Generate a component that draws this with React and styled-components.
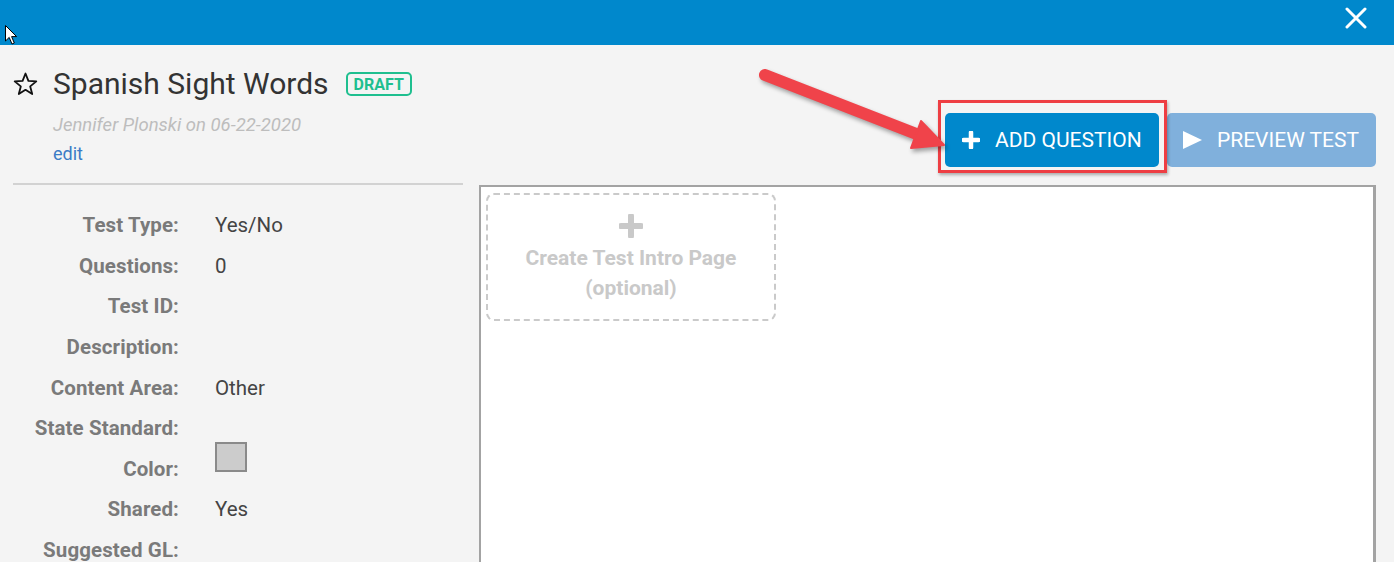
import React from 'react'
import styled, { createGlobalStyle } from 'styled-components'

const GlobalStyle = createGlobalStyle`
  html, body {
    margin: 0;
    padding: 0;
    background: #f4f4f4;
    font-family: Roboto, "Liberation Sans", Arial, sans-serif;
    overflow: hidden;
  }
`

const Page = styled.div`
  position: relative;
  width: 1394px;
  height: 562px;
  overflow: hidden;
  background: #f4f4f4;
`

const TopBar = styled.div`
  height: 45px;
  background: #0088cc;
  display: flex;
  justify-content: flex-end;
  align-items: center;
  padding-right: 26px;
`

const CloseButton = styled.button`
  width: 24px;
  height: 24px;
  padding: 0;
  border: 0;
  background: transparent;
  display: flex;
  align-items: center;
  justify-content: center;
  margin-top: -9px;
`

const Cursor = styled.svg`
  position: absolute;
  left: 5px;
  top: 25px;
`

const Main = styled.div`
  display: grid;
  grid-template-columns: 450px 1fr;
  column-gap: 16px;
  padding: 0 18px 0 13px;
`

const LeftColumn = styled.div`
  display: flex;
  flex-direction: column;
`

const Header = styled.div`
  height: 140px;
  box-sizing: border-box;
  padding-top: 22px;
  border-bottom: 2px solid #d2d2d2;
`

const TitleRow = styled.div`
  display: flex;
  align-items: center;
  height: 34px;
`

const StarIcon = styled.svg`
  flex: none;
  margin-right: 15px;
`

const Title = styled.h1`
  margin: 0;
  font-size: 30px;
  line-height: 34px;
  font-weight: 400;
  color: #333;
`

const Badge = styled.span`
  margin-left: 17px;
  height: 24px;
  box-sizing: border-box;
  padding: 0 6px;
  display: inline-flex;
  align-items: center;
  border: 2px solid #1fbf8f;
  border-radius: 5px;
  color: #1fbf8f;
  font-size: 16px;
  font-weight: 700;
`

const Author = styled.div`
  margin: 11px 0 0 40px;
  font-size: 18.5px;
  line-height: 26px;
  font-style: italic;
  color: #bdbdbd;
`

const EditLink = styled.a`
  display: block;
  margin: 3px 0 0 40px;
  font-size: 18px;
  line-height: 26px;
  color: #3b7cc6;
  text-decoration: none;
`

const Details = styled.dl`
  margin: 0;
  padding-top: 20px;
  display: grid;
  grid-template-columns: 166px 1fr;
  grid-auto-rows: 40.6px;
  column-gap: 36px;
  align-items: center;
`

const Label = styled.dt`
  margin: 0;
  text-align: right;
  font-size: 20.5px;
  font-weight: 700;
  letter-spacing: 0.1px;
  color: #7a7a7a;
`

const Value = styled.dd`
  margin: 0;
  font-size: 20.5px;
  color: #444;
`

const Swatch = styled.div`
  width: 32px;
  height: 30px;
  box-sizing: border-box;
  margin-top: -24px;
  background: ${p => p.color};
  border: 2px solid #8a8a8a;
`

const RightColumn = styled.div`
  display: flex;
  flex-direction: column;
  position: relative;
`

const Toolbar = styled.div`
  height: 140px;
  box-sizing: border-box;
  display: flex;
  justify-content: flex-end;
  align-items: flex-end;
  gap: 8px;
  padding-bottom: 18px;
`

const Highlight = styled.div`
  position: relative;
  display: flex;
`

const HighlightBox = styled.div`
  position: absolute;
  top: -13px;
  left: -7px;
  right: -8px;
  bottom: -6px;
  border: 3px solid #ee3e43;
  box-shadow: 1px 2px 3px rgba(0, 0, 0, 0.3);
  pointer-events: none;
`

const ActionButton = styled.button`
  width: ${p => p.$width}px;
  height: 54px;
  box-sizing: border-box;
  display: flex;
  align-items: center;
  gap: 15px;
  padding: 0 0 0 ${p => p.$padLeft}px;
  border: 0;
  border-radius: 5px;
  background: ${p => p.$bg};
  color: #fff;
  font-family: Roboto, "Liberation Sans", Arial, sans-serif;
  font-size: 21px;
  font-weight: 400;
  white-space: nowrap;
`

const Arrow = styled.svg`
  position: absolute;
  left: 270px;
  top: 15px;
  overflow: visible;
  filter: drop-shadow(2px 3px 2px rgba(0, 0, 0, 0.35));
`

const Canvas = styled.div`
  height: 400px;
  border: 2px solid #a3a3a3;
  border-right-width: 3px;
  background: #fff;
  padding: 6px 5px;
`

const IntroCard = styled.div`
  width: 290px;
  height: 128px;
  box-sizing: border-box;
  border: 2px dashed #cacaca;
  border-radius: 8px;
  display: flex;
  flex-direction: column;
  align-items: center;
  padding-top: 19px;
  color: #c9c9c9;
  font-size: 21px;
  font-weight: 700;
  line-height: 30px;
  text-align: center;
`

const CardPlus = styled.svg`
  margin-bottom: 5px;
`

const details = [
  ['Test Type:', 'Yes/No'],
  ['Questions:', '0'],
  ['Test ID:', ''],
  ['Description:', ''],
  ['Content Area:', 'Other'],
  ['State Standard:', ''],
  ['Color:', 'swatch'],
  ['Shared:', 'Yes'],
  ['Suggested GL:', ''],
]

export default function App() {
  return (
    <Page>
      <GlobalStyle />
      <TopBar>
        <CloseButton aria-label="Close">
          <svg width="22" height="22" viewBox="0 0 22 22">
            <path d="M2 2 L20 20 M20 2 L2 20" stroke="#fff" strokeWidth="3" strokeLinecap="round" />
          </svg>
        </CloseButton>
      </TopBar>
      <Cursor width="13" height="20" viewBox="0 0 13 20">
        <path d="M0.5 0.5 L0.5 16 L4.2 12.4 L7 19 L9.3 18 L6.6 11.6 L11.6 11.6 Z" fill="#fff" stroke="#000" strokeWidth="1" />
      </Cursor>
      <Main>
        <LeftColumn>
          <Header>
            <TitleRow>
              <StarIcon width="25" height="24" viewBox="0 0 25 24">
                <path
                  d="M12.5 1.5 L15.4 8.9 L23.3 9.4 L17.2 14.4 L19.2 22.1 L12.5 17.8 L5.8 22.1 L7.8 14.4 L1.7 9.4 L9.6 8.9 Z"
                  fill="none"
                  stroke="#111"
                  strokeWidth="1.8"
                  strokeLinejoin="round"
                />
              </StarIcon>
              <Title>Spanish Sight Words</Title>
              <Badge>DRAFT</Badge>
            </TitleRow>
            <Author>Jennifer Plonski on 06-22-2020</Author>
            <EditLink href="#">edit</EditLink>
          </Header>
          <Details>
            {details.map(([label, value]) => (
              <React.Fragment key={label}>
                <Label>{label}</Label>
                <Value>{value === 'swatch' ? <Swatch color="#cccccc" /> : value}</Value>
              </React.Fragment>
            ))}
          </Details>
        </LeftColumn>
        <RightColumn>
          <Toolbar>
            <Highlight>
              <ActionButton $bg="#0088cc" $width={214} $padLeft={17}>
                <svg width="18" height="18" viewBox="0 0 18 18">
                  <path d="M9 1.5 V16.5 M1.5 9 H16.5" stroke="#fff" strokeWidth="4.5" strokeLinecap="round" />
                </svg>
                ADD QUESTION
              </ActionButton>
              <HighlightBox />
            </Highlight>
            <ActionButton $bg="#80b0dc" $width={209} $padLeft={16}>
              <svg width="19" height="18" viewBox="0 0 19 18">
                <path d="M0 0 L19 9 L0 18 Z" fill="#fff" />
              </svg>
              PREVIEW TEST
            </ActionButton>
          </Toolbar>
          <Arrow width="200" height="110" viewBox="0 0 200 110">
            <line x1="16" y1="15" x2="170" y2="75" stroke="#f0434a" strokeWidth="12" strokeLinecap="round" />
            <path d="M195 85 L172 61 L162 88 Z" fill="#f0434a" stroke="#f0434a" strokeWidth="2" strokeLinejoin="round" />
          </Arrow>
          <Canvas>
            <IntroCard>
              <CardPlus width="24" height="24" viewBox="0 0 24 24">
                <path d="M12 2 V22 M2 12 H22" stroke="#c9c9c9" strokeWidth="6" strokeLinecap="round" />
              </CardPlus>
              <div>Create Test Intro Page</div>
              <div>(optional)</div>
            </IntroCard>
          </Canvas>
        </RightColumn>
      </Main>
    </Page>
  )
}
